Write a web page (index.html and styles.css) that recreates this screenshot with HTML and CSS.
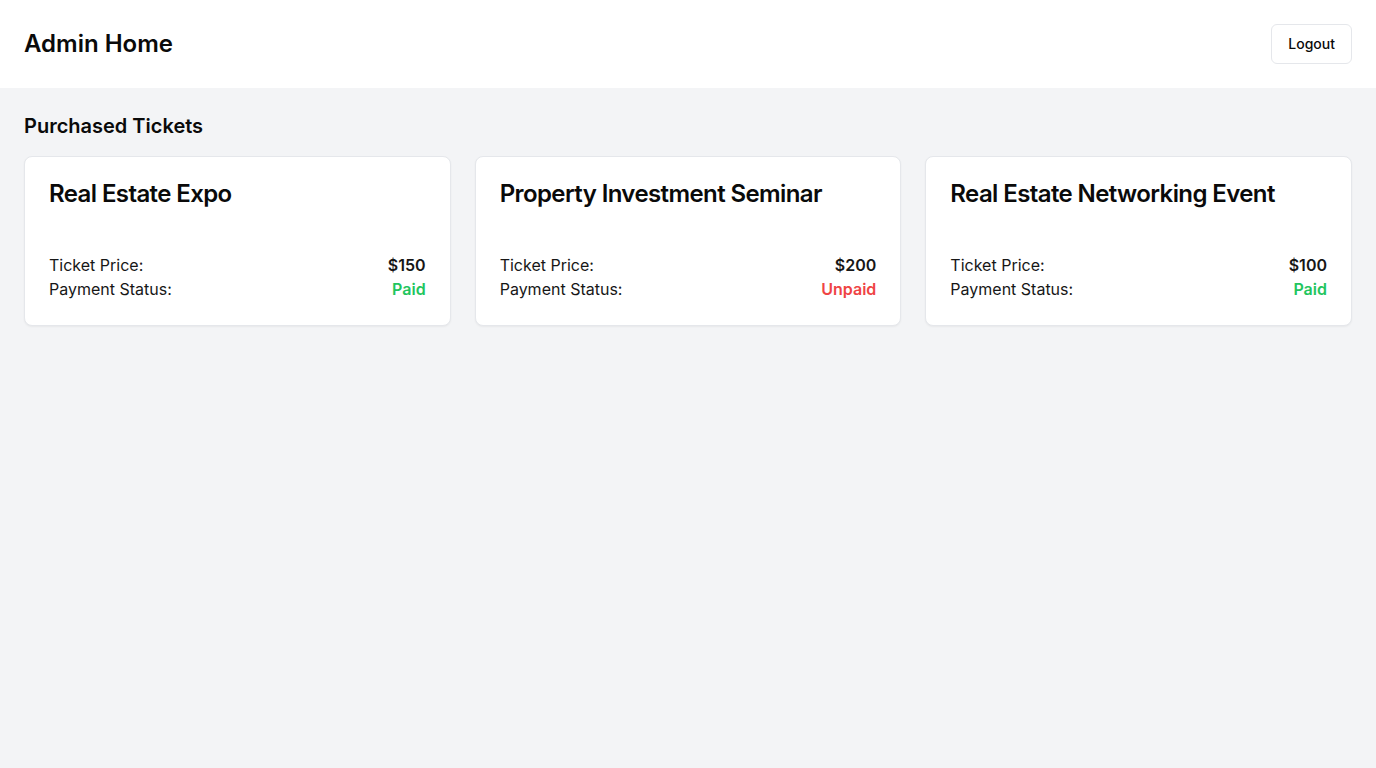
FILE: index.html
```html
<!DOCTYPE html>
<html lang="en">
<head>
<meta charset="utf-8">
<title>Admin Home</title>
<link rel="stylesheet" href="styles.css">
</head>
<body>
<header class="topbar">
  <h1 class="brand">Admin Home</h1>
  <button class="logout">Logout</button>
</header>
<main class="content">
  <h2 class="section-title">Purchased Tickets</h2>
  <div class="grid">
    <div class="card">
      <h3 class="card-title">Real Estate Expo</h3>
      <div class="row"><span>Ticket Price:</span><span class="strong">$150</span></div>
      <div class="row"><span>Payment Status:</span><span class="strong paid">Paid</span></div>
    </div>
    <div class="card">
      <h3 class="card-title">Property Investment Seminar</h3>
      <div class="row"><span>Ticket Price:</span><span class="strong">$200</span></div>
      <div class="row"><span>Payment Status:</span><span class="strong unpaid">Unpaid</span></div>
    </div>
    <div class="card">
      <h3 class="card-title">Real Estate Networking Event</h3>
      <div class="row"><span>Ticket Price:</span><span class="strong">$100</span></div>
      <div class="row"><span>Payment Status:</span><span class="strong paid">Paid</span></div>
    </div>
  </div>
</main>
</body>
</html>
```
FILE: styles.css
```css
* { box-sizing: border-box; }
html, body { margin: 0; padding: 0; }
body {
  font-family: Inter, "Noto Sans", sans-serif;
  background: #f3f4f6;
  color: #0a0a0a;
  min-height: 768px;
}
.topbar {
  height: 88px;
  background: #ffffff;
  display: flex;
  align-items: center;
  justify-content: space-between;
  padding: 0 24px;
}
.brand {
  margin: 0;
  font-size: 24px;
  line-height: 32px;
  font-weight: 600;
}
.logout {
  font-family: inherit;
  font-size: 14px;
  line-height: 20px;
  font-weight: 500;
  color: #0a0a0a;
  background: #ffffff;
  border: 1px solid #e5e7eb;
  border-radius: 6px;
  height: 40px;
  padding: 0 16px 1px;
  cursor: pointer;
}
.content {
  padding: 24px;
}
.section-title {
  margin: 0 0 16px;
  font-size: 20px;
  line-height: 28px;
  font-weight: 600;
}
.grid {
  display: grid;
  grid-template-columns: repeat(3, 1fr);
  gap: 24px;
}
.card {
  background: #ffffff;
  border: 1px solid #e5e7eb;
  border-radius: 8px;
  box-shadow: 0 1px 2px rgba(0,0,0,0.05);
  padding: 22px 24px 24px;
}
.card-title {
  margin: 0 0 44px;
  font-size: 24px;
  line-height: 30px;
  font-weight: 600;
  letter-spacing: -0.025em;
}
.row {
  display: flex;
  justify-content: space-between;
  font-size: 16px;
  line-height: 24px;
  color: #171717;
}
.strong { font-weight: 600; }
.paid { color: #22c55e; }
.unpaid { color: #ef4444; }
```
